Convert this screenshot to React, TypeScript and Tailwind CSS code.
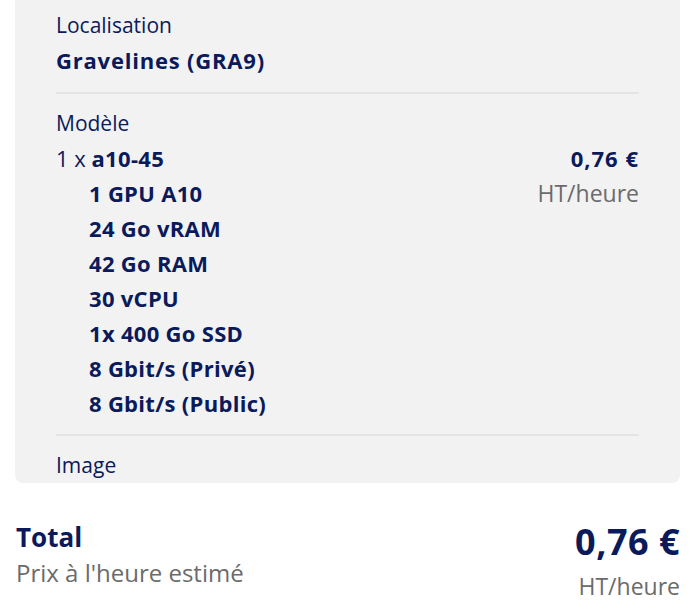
import React from 'react';

const specs = [
  '1 GPU A10',
  '24 Go vRAM',
  '42 Go RAM',
  '30 vCPU',
  '1x 400 Go SSD',
  '8 Gbit/s (Privé)',
  '8 Gbit/s (Public)',
];

const App = () => {
  return (
    <div className="w-[693px] h-[613px] bg-white overflow-hidden font-['Open_Sans',sans-serif] text-[#0b1a5a]">
      <div className="ml-[15px] w-[665px] bg-[#f2f2f2] rounded-b-lg pt-[8px] px-[41px]">
        <div className="text-[21px] leading-[35px]">Localisation</div>
        <div className="text-[22px] leading-[35px] font-bold tracking-[0.8px]">Gravelines (GRA9)</div>
        <div className="mt-[14px] mb-[12px] h-[2px] bg-[#e4e4e4]" />

        <div className="text-[21px] leading-[35px]">Modèle</div>
        <div className="flex justify-between">
          <div>
            <div className="text-[22px] leading-[35px]">
              1 x <span className="font-bold tracking-[0.3px]">a10-45</span>
            </div>
            <div className="pl-[33px]">
              {specs.map((s) => (
                <div key={s} className="text-[22px] leading-[35px] font-bold tracking-[0.3px]">
                  {s}
                </div>
              ))}
            </div>
          </div>
          <div className="text-right">
            <div className="text-[22px] leading-[35px] font-bold tracking-[1px]">0,76 €</div>
            <div className="text-[23px] leading-[35px] text-[#6b6b6b]">HT/heure</div>
          </div>
        </div>
        <div className="mt-[13px] mb-[12px] h-[2px] bg-[#e4e4e4]" />

        <div className="text-[21px] leading-[35px]">Image</div>
      </div>

      <div className="mt-[36px] pl-[16px] pr-[13px] flex justify-between">
        <div>
          <div className="text-[26px] leading-[36px] font-bold">Total</div>
          <div className="text-[24px] leading-[36px] text-[#6b6b6b]">Prix à l'heure estimé</div>
        </div>
        <div className="text-right">
          <div className="mt-[1px] text-[36px] leading-[44px] font-bold tracking-[0.5px]">0,76 €</div>
          <div className="mt-[6px] text-[23px] leading-[32px] text-[#6b6b6b]">HT/heure</div>
        </div>
      </div>
    </div>
  );
};

export default App;
